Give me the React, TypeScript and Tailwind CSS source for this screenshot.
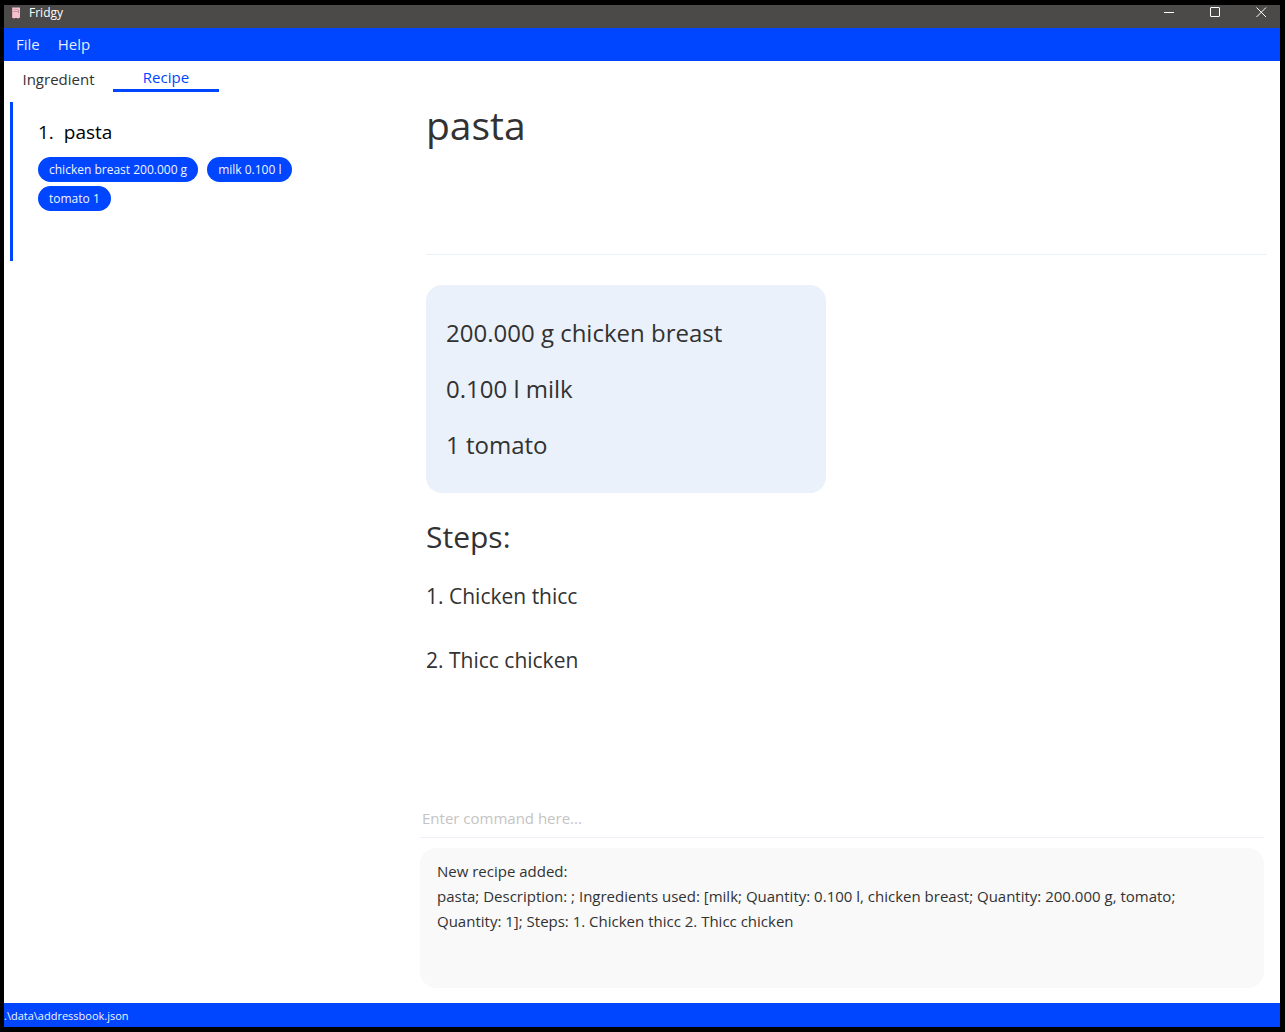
import { useState } from "react";

const tags = ["chicken breast 200.000 g", "milk 0.100 l", "tomato 1"];
const ingredients = ["200.000 g chicken breast", "0.100 l milk", "1 tomato"];
const steps = ["Chicken thicc", "Thicc chicken"];

function FridgeIcon() {
  return (
    <svg className="h-3 w-2" viewBox="0 0 8 12" aria-hidden="true">
      <rect x="0" y="0" width="8" height="11" rx="1" fill="#f5bfcb" />
      <rect x="0" y="0" width="8" height="1" fill="#9c8790" />
      <rect x="0" y="4" width="6" height="1" fill="#c795a8" />
      <rect x="2" y="2" width="4" height="1" fill="#d3a3b4" />
      <rect x="6" y="3" width="1" height="3" fill="#b98ba0" />
      <rect x="0" y="1" width="1" height="10" fill="#d7a9b6" />
      <rect x="1" y="11" width="2" height="1" fill="#7d6a70" />
      <rect x="5" y="11" width="2" height="1" fill="#7d6a70" />
    </svg>
  );
}

function TitleBar() {
  return (
    <header className="flex h-[23px] items-start bg-[#4c4a48] pl-2 text-white">
      <div className="flex items-center gap-[9px] text-xs leading-4">
        <FridgeIcon />
        <h1>Fridgy</h1>
      </div>
      <div className="ml-auto flex gap-[35px] pr-[13px]">
        <button aria-label="Minimize" className="flex h-[14px] items-center">
          <svg width="11" height="11" viewBox="0 0 11 11" stroke="currentColor" fill="none">
            <path d="M0 5.5h10" />
          </svg>
        </button>
        <button aria-label="Maximize" className="flex h-[14px] items-center">
          <svg width="11" height="11" viewBox="0 0 11 11" stroke="currentColor" fill="none">
            <rect x="0.5" y="0.5" width="9" height="9" rx="0.5" />
          </svg>
        </button>
        <button aria-label="Close" className="flex h-[14px] items-center">
          <svg width="11" height="11" viewBox="0 0 11 11" stroke="currentColor" fill="none">
            <path d="M0.5 0.5l9.5 9.5M10 0.5L0.5 10" />
          </svg>
        </button>
      </div>
    </header>
  );
}

export default function App() {
  const [command, setCommand] = useState("");
  return (
    <div className="flex min-h-screen flex-col border-4 border-r-[5px] border-t-[5px] border-b-[5px] border-black bg-white font-['Open_Sans','Noto_Sans',sans-serif] text-[#323232]">
      <TitleBar />
      <nav aria-label="Menu" className="flex h-[33px] items-center gap-[18px] bg-[#0045ff] px-3 text-[15px] text-[#e6ecff]">
        <button>File</button>
        <button>Help</button>
      </nav>

      <main className="flex flex-1">
        <aside className="w-[416px] shrink-0">
          <div role="tablist" className="flex h-[31px] items-stretch text-[15px]">
            <button role="tab" aria-selected="false" className="w-[109px] pt-[6px]">
              Ingredient
            </button>
            <button role="tab" aria-selected="true" className="w-[106px] border-b-[3px] border-[#0045ff] pt-1 text-[#0045ff]">
              Recipe
            </button>
          </div>
          <ul className="pl-[6px] pt-[10px]">
            <li className="h-[159px] border-l-[3px] border-[#0045ff] pl-[25px] pt-4">
              <h2 className="flex gap-[10px] text-[19px] leading-7 text-black">
                <span>1.</span>
                <span>pasta</span>
              </h2>
              <ul className="mt-[11px] flex w-[280px] flex-wrap gap-x-[9px] gap-y-1">
                {tags.map((tag) => (
                  <li key={tag} className="h-[25px] rounded-full bg-[#0045ff] px-[11px] text-xs leading-[25px] text-[#f2f5ff]">
                    {tag}
                  </li>
                ))}
              </ul>
            </li>
          </ul>
        </aside>

        <section className="flex min-w-0 flex-1 flex-col pr-[13px]">
          <article className="flex-1 pl-[6px] pt-8">
            <div className="h-[162px] border-b border-[#eaf1fa]">
              <h2 className="text-[39px] leading-[64px]">pasta</h2>
            </div>
            <ul className="mt-[30px] flex w-[400px] flex-col gap-4 rounded-[16px] bg-[#eaf1fa] px-5 py-7 text-2xl leading-10">
              {ingredients.map((item) => (
                <li key={item}>{item}</li>
              ))}
            </ul>
            <h3 className="mt-6 text-[30px] leading-10">Steps:</h3>
            <ol className="mt-[19px] flex flex-col gap-6 text-[21px] leading-10">
              {steps.map((step, i) => (
                <li key={step}>
                  {i + 1}. {step}
                </li>
              ))}
            </ol>
          </article>

          <form className="mr-[3px] pb-[15px]" onSubmit={(e) => e.preventDefault()}>
            <input
              aria-label="Command"
              value={command}
              onChange={(e) => setCommand(e.target.value)}
              placeholder="Enter command here..."
              className="block h-[38px] w-full border-b border-[#eeeffa] px-[2px] pb-[2px] text-[15px] outline-none placeholder:text-[#c4c4c4]"
            />
            <output className="mt-[10px] block min-h-[140px] rounded-[16px] bg-[#f9f9f9] py-[11px] pl-[17px] pr-[60px] text-[15px] leading-[25px]">
              New recipe added:
              <br />
              pasta; Description: ; Ingredients used: [milk; Quantity: 0.100 l, chicken breast; Quantity: 200.000 g, tomato; Quantity: 1]; Steps: 1. Chicken thicc 2. Thicc chicken
            </output>
          </form>
        </section>
      </main>

      <footer className="h-6 bg-[#0045ff] text-[11px] leading-[26px] text-[#f2f5ff]">.\data\addressbook.json</footer>
    </div>
  );
}
